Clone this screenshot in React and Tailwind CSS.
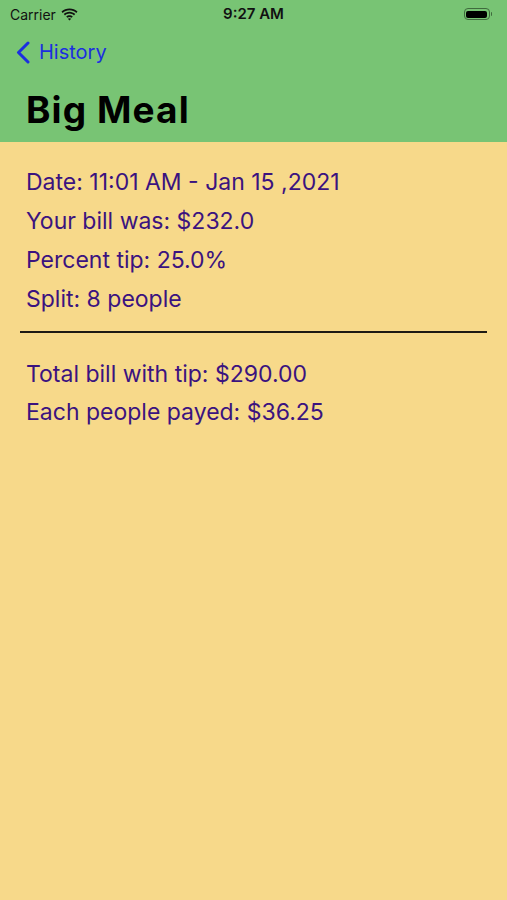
export default function App() {
  const details = [
    "Date: 11:01 AM - Jan 15 ,2021",
    "Your bill was: $232.0",
    "Percent tip: 25.0%",
    "Split: 8 people",
  ]
  const totals = ["Total bill with tip: $290.00", "Each people payed: $36.25"]

  return (
    <div className="w-[507px] h-[900px] bg-[#f7d98a] font-['Inter','Liberation_Sans',sans-serif] overflow-hidden">
      <div className="h-[142px] bg-[#78c474]">
        {/* status bar */}
        <div className="h-[28px] flex items-center justify-between px-[10px] relative">
          <div className="flex items-center gap-[5px] text-[14px] text-[#111]">
            <span>Carrier</span>
            <svg width="17" height="13" viewBox="0 0 17 13" fill="#111">
              <path d="M8.5 2.2c2.6 0 5 1 6.8 2.7l1.2-1.3C14.4 1.6 11.6.4 8.5.4S2.6 1.6.5 3.6l1.2 1.3C3.5 3.2 5.9 2.2 8.5 2.2z" />
              <path d="M8.5 5.6c1.7 0 3.3.7 4.5 1.8l1.2-1.3C12.7 4.7 10.7 3.8 8.5 3.8S4.3 4.7 2.8 6.1L4 7.4c1.2-1.1 2.8-1.8 4.5-1.8z" />
              <path d="M8.5 9c.8 0 1.5.3 2.1.8l1.2-1.3c-.9-.8-2.1-1.3-3.3-1.3s-2.4.5-3.3 1.3l1.2 1.3C7 9.3 7.7 9 8.5 9z" />
              <path d="M8.5 12.6l1.7-1.8c-.5-.4-1.1-.6-1.7-.6s-1.2.2-1.7.6z" />
            </svg>
          </div>
          <span className="absolute left-1/2 -translate-x-1/2 text-[15px] font-semibold text-[#111]">9:27 AM</span>
          <div className="flex items-center mr-[5px]">
            <div className="w-[26px] h-[12px] rounded-[4px] border border-[#3f6b3d] p-[1.5px]">
              <div className="w-full h-full rounded-[2px] bg-black" />
            </div>
            <div className="w-[1.5px] h-[4px] bg-[#3f6b3d] rounded-r-sm ml-[1px]" />
          </div>
        </div>

        {/* nav */}
        <div className="h-[48px] flex items-center pl-[16px] gap-[9px] text-[#1b2fe0]">
          <svg width="14" height="23" viewBox="0 0 14 23" fill="none" stroke="#1b2fe0" strokeWidth="3" strokeLinecap="round" strokeLinejoin="round">
            <path d="M12 2L2.5 11.5 12 21" />
          </svg>
          <span className="text-[20px] leading-none">History</span>
        </div>

        <h1 className="pl-[26px] pt-[15px] text-[37px] font-bold leading-none text-black tracking-[1.1px]">Big Meal</h1>
      </div>

      <div className="pt-[21px] text-[#3b137f] text-[23px]">
        <div className="px-[26px]">
          {details.map(t => (
            <p key={t} className="leading-[39px]">{t}</p>
          ))}
        </div>
        <div className="mx-[20px] mt-[12px] h-[2px] bg-[#1e1a14]" />
        <div className="px-[26px] pt-[22px]">
          {totals.map(t => (
            <p key={t} className="leading-[38px]">{t}</p>
          ))}
        </div>
      </div>
    </div>
  )
}
